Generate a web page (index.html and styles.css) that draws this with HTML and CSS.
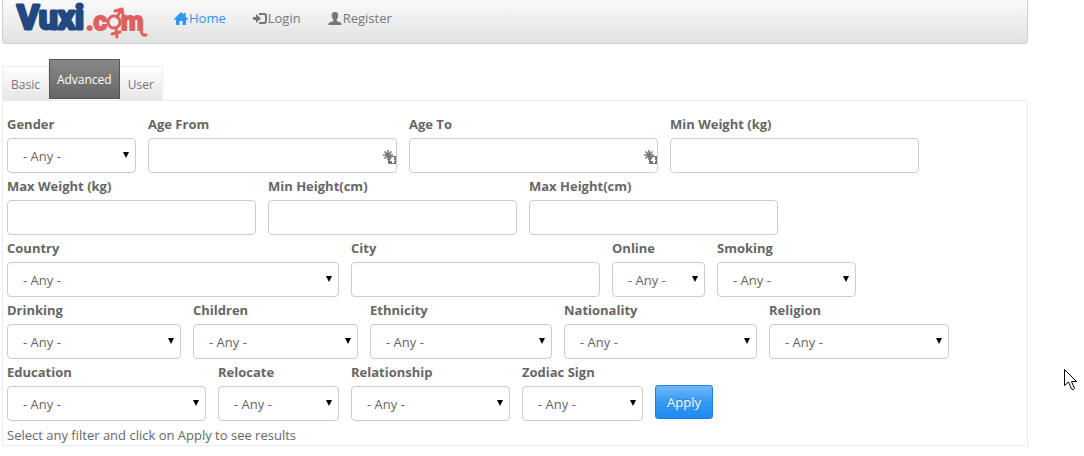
FILE: index.html
```html
<!DOCTYPE html>
<html lang="en">
<head>
  <meta charset="UTF-8">
  <title>Vuxi.com - Advanced search</title>
  <link rel="stylesheet" href="styles.css">
</head>
<body>
  <div class="container">
    <header class="navbar">
      <a class="brand" href="#" aria-label="Vuxi.com">
        <svg class="logo" width="136" height="40" viewBox="0 0 136 40">
          <text class="logo-blue" x="3" y="29">Vuxi</text>
          <g class="logo-red">
            <text x="72" y="30">.c</text>
            <text x="107" y="30">m</text>
            <path d="M127 29q0 7 5 6"/>
            <circle cx="100" cy="22" r="6"/>
            <path d="M103 17l4-7M101 11l7-2 1 6M102 28l1 9M98 34l8-2"/>
          </g>
        </svg>
      </a>
      <nav class="nav">
        <a class="nav-link active" href="#">
          <svg width="14" height="13" viewBox="0 0 14 13"><path d="M7 0l2.600 2.600V1h2v3.600L14 7v.8h-2V13H8.500V9h-3v4H2V7.800H0V7z"/></svg>Home
        </a>
        <a class="nav-link" href="#">
          <svg width="14" height="13" viewBox="0 0 14 13"><path d="M0 5h3V2l5 4.500L3 11V8H0z"/><path d="M6 2h5q2 0 2 2v5q0 2-2 2H6" fill="none" stroke="currentColor" stroke-width="2"/></svg>Login
        </a>
        <a class="nav-link" href="#">
          <svg width="14" height="13" viewBox="0 0 14 13"><path d="M7 0c2.500 0 3.500 1.500 3.200 4-.1 1.500-.7 2.600-1.500 3.500v1.500c1 .7 4.300 1 4.800 2.500V13H.5v-1.500C1 10 4.300 9.700 5.300 9V7.500C4.500 6.600 3.900 5.500 3.800 4 3.500 1.500 4.500 0 7 0z"/></svg>Register
        </a>
      </nav>
    </header>

    <div class="tabs">
      <a class="tab" href="#">Basic</a>
      <a class="tab active" href="#">Advanced</a>
      <a class="tab" href="#">User</a>
    </div>

    <form class="panel">
      <div class="filters">
        <div class="field w-gender">
          <label for="gender">Gender</label>
          <select id="gender"><option>- Any -</option></select>
        </div>
        <div class="field">
          <label for="age-from">Age From</label>
          <input id="age-from" type="text">
          <svg class="fill-icon" width="14" height="14" viewBox="0 0 14 14"><path d="M5 0v10M0 5h10M1.500 1.500l7 7M8.500 1.500l-7 7" stroke="#777" stroke-width="1.600"/><path d="M5 6h8v8H5z" fill="#777"/><path d="M9 7h2v3h1v1h-1v2H9v-2H7v-1z" fill="#fff"/></svg>
        </div>
        <div class="field">
          <label for="age-to">Age To</label>
          <input id="age-to" type="text">
          <svg class="fill-icon" width="14" height="14" viewBox="0 0 14 14"><path d="M5 0v10M0 5h10M1.500 1.500l7 7M8.500 1.500l-7 7" stroke="#777" stroke-width="1.600"/><path d="M5 6h8v8H5z" fill="#777"/><path d="M9 7h2v3h1v1h-1v2H9v-2H7v-1z" fill="#fff"/></svg>
        </div>
        <div class="field">
          <label for="min-weight">Min Weight (kg)</label>
          <input id="min-weight" type="text">
        </div>
        <div class="field">
          <label for="max-weight">Max Weight (kg)</label>
          <input id="max-weight" type="text">
        </div>
        <div class="field">
          <label for="min-height">Min Height(cm)</label>
          <input id="min-height" type="text">
        </div>
        <div class="field">
          <label for="max-height">Max Height(cm)</label>
          <input id="max-height" type="text">
        </div>
        <div class="field w-country">
          <label for="country">Country</label>
          <select id="country"><option>- Any -</option></select>
        </div>
        <div class="field">
          <label for="city">City</label>
          <input id="city" type="text">
        </div>
        <div class="field w-online">
          <label for="online">Online</label>
          <select id="online"><option>- Any -</option></select>
        </div>
        <div class="field w-smoking">
          <label for="smoking">Smoking</label>
          <select id="smoking"><option>- Any -</option></select>
        </div>
        <div class="field w-drinking">
          <label for="drinking">Drinking</label>
          <select id="drinking"><option>- Any -</option></select>
        </div>
        <div class="field w-children">
          <label for="children">Children</label>
          <select id="children"><option>- Any -</option></select>
        </div>
        <div class="field w-ethnicity">
          <label for="ethnicity">Ethnicity</label>
          <select id="ethnicity"><option>- Any -</option></select>
        </div>
        <div class="field w-nationality">
          <label for="nationality">Nationality</label>
          <select id="nationality"><option>- Any -</option></select>
        </div>
        <div class="field w-religion">
          <label for="religion">Religion</label>
          <select id="religion"><option>- Any -</option></select>
        </div>
        <div class="field w-education">
          <label for="education">Education</label>
          <select id="education"><option>- Any -</option></select>
        </div>
        <div class="field w-relocate">
          <label for="relocate">Relocate</label>
          <select id="relocate"><option>- Any -</option></select>
        </div>
        <div class="field w-relationship">
          <label for="relationship">Relationship</label>
          <select id="relationship"><option>- Any -</option></select>
        </div>
        <div class="field w-zodiac">
          <label for="zodiac">Zodiac Sign</label>
          <select id="zodiac"><option>- Any -</option></select>
        </div>
        <button class="btn" type="submit">Apply</button>
      </div>
      <p class="hint">Select any filter and click on Apply to see results</p>
    </form>
  </div>

  <svg class="cursor" width="13" height="22" viewBox="0 0 13 22"><path d="M.5.5v16l4-3.500 3 7q2 1.500 3-.5l-3-7h5z" fill="#fff" stroke="#000"/></svg>
</body>
</html>
```
FILE: styles.css
```css
* {
  box-sizing: border-box;
}

body {
  margin: 0;
  background: #fff;
  color: #666;
  font-family: "Open Sans", sans-serif;
  font-size: 13px;
  line-height: 20px;
}

a {
  color: #777;
  text-decoration: none;
}

.container {
  margin: 0 56px 0 2px;
}

/* navbar */
.navbar {
  display: flex;
  align-items: flex-start;
  height: 44px;
  padding-left: 11px;
  border: 1px solid #d0d0d0;
  border-top: 0;
  border-radius: 0 0 4px 4px;
  background: linear-gradient(#fafafa, #e2e2e2);
}

.logo {
  display: block;
  overflow: visible;
  font-family: Roboto, sans-serif;
  font-weight: bold;
}

.logo-blue {
  fill: #23487f;
  stroke: #23487f;
  stroke-width: 3;
  stroke-linejoin: round;
  font-size: 34px;
}

.logo-red {
  fill: #e06060;
  stroke: #e06060;
  stroke-width: 2;
  stroke-linejoin: round;
  stroke-linecap: round;
  font-size: 26px;
}

.logo-red circle,
.logo-red path {
  fill: none;
  stroke-width: 3;
}

.nav {
  display: flex;
  gap: 27px;
  padding: 8px 0 0 24px;
}

.nav-link {
  display: flex;
  align-items: center;
  gap: 1px;
}

.nav-link svg {
  fill: currentColor;
}

.nav-link.active {
  color: #2f96f3;
}

/* tabs */
.tabs {
  display: flex;
  align-items: flex-end;
  margin-top: 15px;
  font-size: 12px;
}

.tab {
  height: 34px;
  padding: 8px 8px 0;
  border: 1px solid #ededed;
  border-bottom: 0;
  background: linear-gradient(#fff, #e6e6e6);
}

.tab + .tab {
  border-left: 0;
}

.tab.active {
  height: 40px;
  margin-bottom: 1px;
  padding: 10px 7px 0;
  border: 1px solid #555;
  background: linear-gradient(#888, #666);
  color: #fff;
}

/* filters */
.panel {
  padding: 16px 4px 0;
  border: 1px solid #ededed;
}

.filters {
  display: flex;
  flex-wrap: wrap;
  align-items: flex-end;
  gap: 6px 12px;
}

.field {
  position: relative;
  width: 249px;
}

.w-gender { width: 129px; }
.w-country { width: 332px; }
.w-online { width: 93px; }
.w-smoking { width: 139px; }
.w-drinking { width: 174px; }
.w-children { width: 165px; }
.w-ethnicity { width: 182px; }
.w-nationality { width: 193px; }
.w-religion { width: 180px; }
.w-education { width: 199px; }
.w-relocate { width: 121px; }
.w-relationship { width: 159px; }
.w-zodiac { width: 121px; }

.field label {
  display: block;
  margin-bottom: 6px;
  font-weight: bold;
  line-height: 15px;
}

.field input,
.field select {
  display: block;
  width: 100%;
  height: 35px;
  padding: 0 15px;
  border: 1px solid #ccc;
  border-radius: 4px;
  background: #fff;
  color: #666;
  font: inherit;
}

.field select {
  appearance: none;
}

.field:has(select)::after {
  content: "";
  position: absolute;
  right: 7px;
  bottom: 15px;
  border: 3px solid transparent;
  border-top: 6px solid #000;
  border-bottom: 0;
}

.fill-icon {
  position: absolute;
  right: 0;
  bottom: 9px;
}

.btn {
  height: 34px;
  margin-bottom: 2px;
  padding: 0 11px;
  border: 1px solid #1480e8;
  border-radius: 3px;
  background: linear-gradient(#72b8f8, #3399f5 50%, #1f8af0);
  color: #fff;
  font: inherit;
  text-shadow: 0 -1px 0 rgba(0, 0, 0, 0.25);
}

.hint {
  margin: 4px 0 0;
}

/* mouse pointer */
.cursor {
  position: fixed;
  right: 7px;
  top: 369px;
}
```
